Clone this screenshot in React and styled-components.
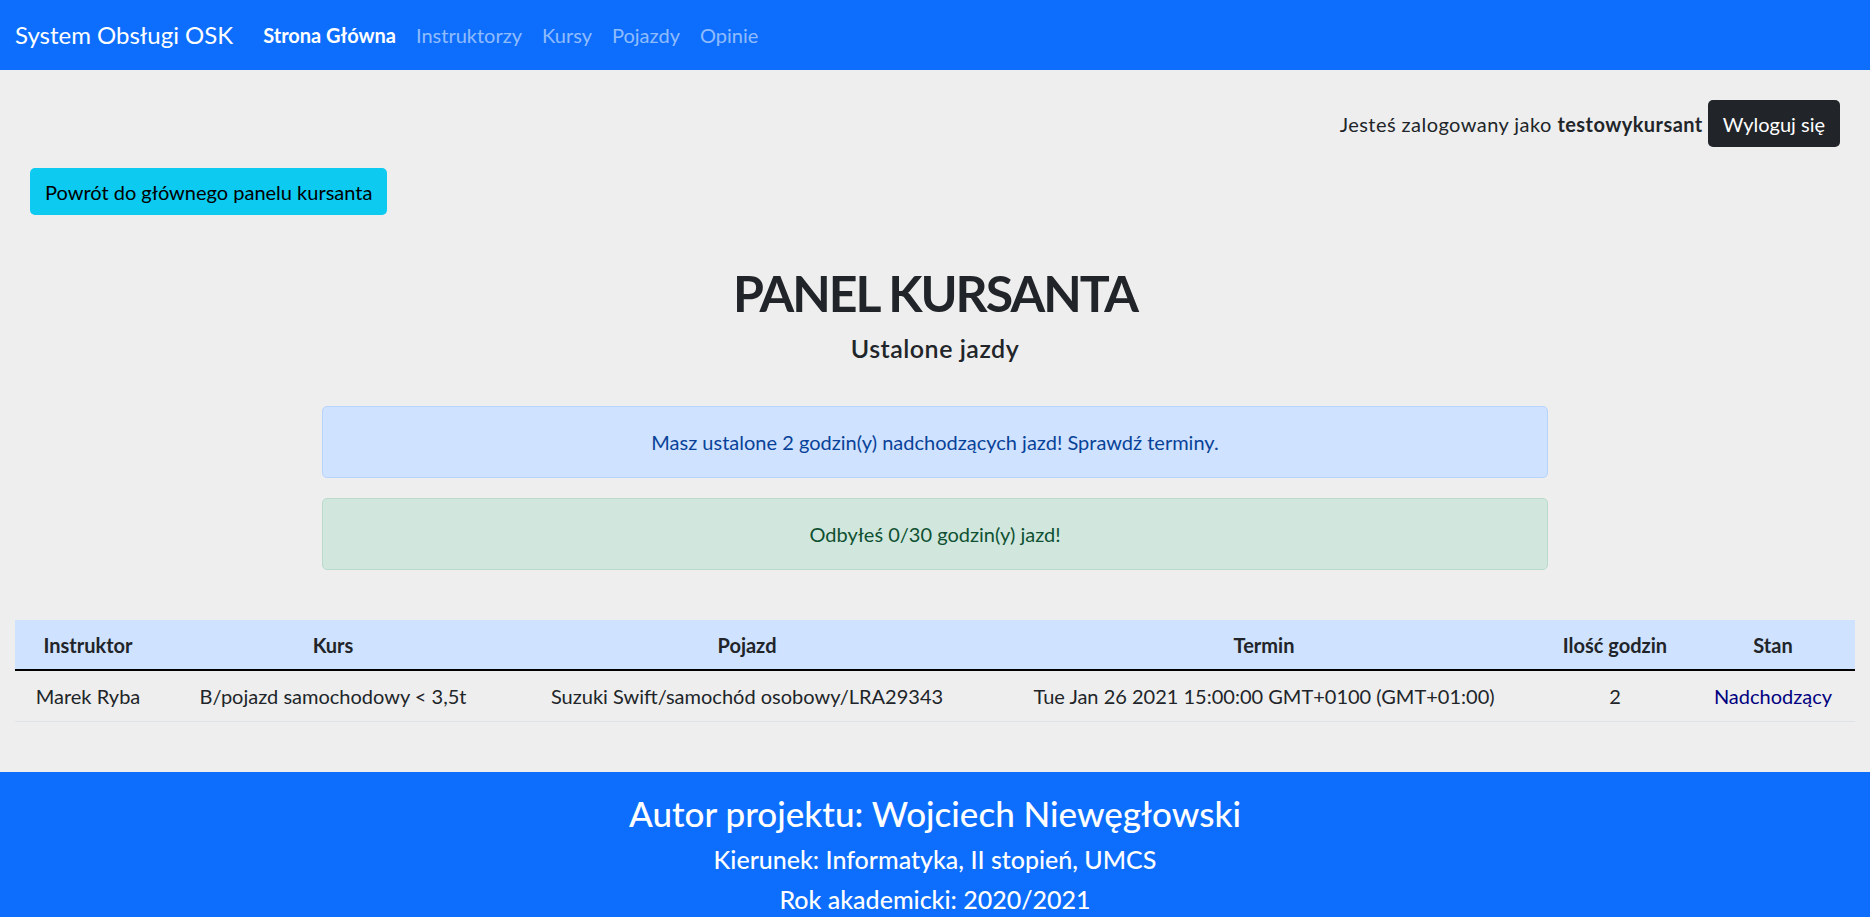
import React from "react";
import styled, { createGlobalStyle } from "styled-components";

const GlobalStyle = createGlobalStyle`
    * {
        box-sizing: border-box;
    }

    body {
        margin: 0;
        background: #eeeeee;
        color: #212529;
        font-family: "Lato", "Open Sans", sans-serif;
        font-size: 20px;
        line-height: 1.5;
    }
`;

const Navbar = styled.nav`
    display: flex;
    align-items: center;
    height: 70px;
    padding: 0 15px;
    background: #0d6efd;
`;

const Brand = styled.a`
    margin-right: 20px;
    font-size: 24px;
    color: #fff;
    text-decoration: none;
`;

const NavLink = styled.a`
    padding: 10px;
    font-size: 20px;
    font-weight: ${(props) => (props.active ? 700 : 400)};
    color: ${(props) => (props.active ? "#fff" : "rgba(255, 255, 255, 0.55)")};
    text-decoration: none;
`;

const UserBar = styled.div`
    display: flex;
    justify-content: flex-end;
    align-items: center;
    gap: 5px;
    margin-top: 30px;
    padding-right: 30px;
`;

const UserText = styled.span`
    letter-spacing: 0.45px;
`;

const Button = styled.button`
    padding: 0 15px;
    height: 47px;
    border: none;
    border-radius: 5px;
    font-family: inherit;
    font-size: 20px;
    background: ${(props) => (props.variant === "dark" ? "#212529" : "#0dcaf0")};
    color: ${(props) => (props.variant === "dark" ? "#fff" : "#000")};
    cursor: pointer;
`;

const BackRow = styled.div`
    margin-top: 21px;
    padding-left: 30px;
`;

const Title = styled.h1`
    margin: 48px 0 10px;
    text-align: center;
    font-size: 50px;
    font-weight: 700;
    letter-spacing: -2px;
    line-height: 1.2;
`;

const Subtitle = styled.h5`
    margin: 0;
    text-align: center;
    font-size: 25px;
    font-weight: 600;
    letter-spacing: 0.5px;
    line-height: 1.2;
`;

const Alerts = styled.div`
    width: 1226px;
    margin: 43px auto 0;
    display: flex;
    flex-direction: column;
    gap: 20px;
`;

const Alert = styled.div`
    height: 72px;
    padding: 20px;
    border: 1px solid ${(props) => (props.kind === "success" ? "#badbcc" : "#b6d4fe")};
    border-radius: 5px;
    background: ${(props) => (props.kind === "success" ? "#d1e7dd" : "#cfe2ff")};
    color: ${(props) => (props.kind === "success" ? "#0f5132" : "#084298")};
    text-align: center;
    line-height: 30px;
`;

const TableWrap = styled.div`
    padding: 0 15px;
    margin-top: 50px;
`;

const Table = styled.table`
    width: 100%;
    table-layout: fixed;
    border-collapse: collapse;
    text-align: center;

    th {
        height: 50px;
        padding: 0 10px;
        background: #cfe2ff;
        border-bottom: 2px solid #000;
        font-weight: 700;
    }

    td {
        height: 51px;
        padding: 0 10px;
        border-bottom: 1px solid #dee2e6;
    }
`;

const Status = styled.span`
    color: #000080;
`;

const Footer = styled.footer`
    margin-top: 50px;
    padding: 20px 0;
    background: #0d6efd;
    color: #fff;
    text-align: center;

    h3 {
        margin: 0 0 10px;
        font-size: 35px;
        font-weight: 500;
        line-height: 1.2;
    }

    h5 {
        margin: 0 0 10px;
        font-size: 25px;
        font-weight: 500;
        line-height: 1.2;
    }
`;

const columns = [
    { title: "Instruktor", width: 146 },
    { title: "Kurs", width: 344 },
    { title: "Pojazd", width: 484 },
    { title: "Termin", width: 550 },
    { title: "Ilość godzin", width: 152 },
    { title: "Stan", width: 164 },
];

const rides = [
    {
        instructor: "Marek Ryba",
        course: "B/pojazd samochodowy < 3,5t",
        car: "Suzuki Swift/samochód osobowy/LRA29343",
        date: "Tue Jan 26 2021 15:00:00 GMT+0100 (GMT+01:00)",
        hours: 2,
        state: "Nadchodzący",
    },
];

const App = () => {
    return (
        <>
            <GlobalStyle />
            <Navbar>
                <Brand href="#">System Obsługi OSK</Brand>
                <NavLink href="#" active>Strona Główna</NavLink>
                <NavLink href="#">Instruktorzy</NavLink>
                <NavLink href="#">Kursy</NavLink>
                <NavLink href="#">Pojazdy</NavLink>
                <NavLink href="#">Opinie</NavLink>
            </Navbar>

            <UserBar>
                <UserText>Jesteś zalogowany jako <b>testowykursant</b></UserText>
                <Button variant="dark">Wyloguj się</Button>
            </UserBar>

            <BackRow>
                <Button variant="info">Powrót do głównego panelu kursanta</Button>
            </BackRow>

            <Title>PANEL KURSANTA</Title>
            <Subtitle>Ustalone jazdy</Subtitle>

            <Alerts>
                <Alert kind="primary">Masz ustalone 2 godzin(y) nadchodzących jazd! Sprawdź terminy.</Alert>
                <Alert kind="success">Odbyłeś 0/30 godzin(y) jazd!</Alert>
            </Alerts>

            <TableWrap>
                <Table>
                    <colgroup>
                        {columns.map((col) => (
                            <col key={col.title} style={{ width: col.width }} />
                        ))}
                    </colgroup>
                    <thead>
                        <tr>
                            {columns.map((col) => (
                                <th key={col.title}>{col.title}</th>
                            ))}
                        </tr>
                    </thead>
                    <tbody>
                        {rides.map((ride, index) => (
                            <tr key={index}>
                                <td>{ride.instructor}</td>
                                <td>{ride.course}</td>
                                <td>{ride.car}</td>
                                <td>{ride.date}</td>
                                <td>{ride.hours}</td>
                                <td><Status>{ride.state}</Status></td>
                            </tr>
                        ))}
                    </tbody>
                </Table>
            </TableWrap>

            <Footer>
                <h3>Autor projektu: Wojciech Niewęgłowski</h3>
                <h5>Kierunek: Informatyka, II stopień, UMCS</h5>
                <h5>Rok akademicki: 2020/2021</h5>
            </Footer>
        </>
    );
};

export default App;
